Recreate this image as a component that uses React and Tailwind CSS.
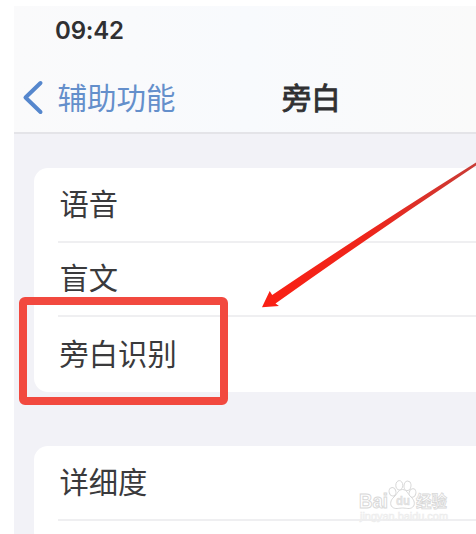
const Row = ({ children, last }) => (
  <div className="flex h-[74.5px] pl-6">
    <div className={`flex flex-1 items-center ${last ? '' : 'border-b-2 border-[#efeff1]'}`}>
      <span className="pb-[3.5px] pl-[1.5px] text-[29.3px] leading-none text-[#3a3a3c]">{children}</span>
    </div>
  </div>
);

const Watermark = () => (
  <svg className="absolute left-[356px] top-[476px]" width="98" height="50" viewBox="0 0 98 50" fill="#fff" stroke="#d8d8d8" strokeWidth="1">
    <g fontFamily="'Liberation Sans', 'Noto Sans CJK SC', sans-serif" fontWeight="700">
      <text x="3" y="32" fontSize="20" textLength="29" lengthAdjust="spacingAndGlyphs">Bai</text>
      <ellipse cx="36.5" cy="15.800" rx="3.4" ry="4.3" transform="rotate(-15 36.5 15.8)" />
      <ellipse cx="43.3" cy="9.3" rx="3.5" ry="4.700" />
      <ellipse cx="51.5" cy="9.8" rx="3.500" ry="4.700" transform="rotate(8 51.5 9.8)" />
      <ellipse cx="56.5" cy="17" rx="3.4" ry="4.3" transform="rotate(15 56.5 17)" />
      <path d="M46.500 13.500c-4.500 0-5.500 5-8.500 7.500-3.500 3-4.500 7.500-1.800 10 3 2.700 6.800 1 10.300 1s7.300 1.700 10.300-1c2.700-2.500 1.700-7-1.800-10-3-2.500-4-7.500-8.500-7.500z" />
      <text x="40" y="29" fontSize="13" fill="#e6e6e6" strokeWidth=".4" textLength="14" lengthAdjust="spacingAndGlyphs">du</text>
      <text x="60" y="31" fontSize="16" strokeWidth=".8" textLength="31" lengthAdjust="spacingAndGlyphs">经验</text>
      <text x="4" y="44" fontSize="10" fontWeight="400" fill="#f7f7f7" stroke="#ececec" strokeWidth=".5" textLength="88" lengthAdjust="spacingAndGlyphs">jingyan.baidu.com</text>
    </g>
  </svg>
);

export default function App() {
  return (
    <div className="relative h-[534px] w-[476px] overflow-hidden bg-white pl-3.5 pt-1.5 font-['Noto_Sans_CJK_SC',sans-serif]">
      <div className="h-[528px] overflow-hidden bg-[#f2f2f7]">
        <header className="h-[128px] border-b-2 border-[#e4e4e8] bg-linear-to-r from-[#fafafb] via-[#f8fafd] to-[#fafafa]">
          <div className="flex h-12 items-center pl-[41px]">
            <span className="pt-[1px] font-['Inter',sans-serif] text-[24px] font-semibold leading-none tracking-[-0.2px] text-[#303032]">09:42</span>
          </div>
          <div className="flex h-[88px] items-center pl-2">
            <svg width="22" height="36" viewBox="0 0 22 36" fill="none" stroke="#5687cd" strokeWidth="4" strokeLinecap="round" strokeLinejoin="round">
              <path d="M18.500 3 3.500 17.500l15 14.500" />
            </svg>
            <span className="ml-[13.5px] pb-[3px] text-[29.5px] leading-none text-[#648fcb]">辅助功能</span>
            <h1 className="ml-[106.5px] pb-[3px] text-[29.3px] font-normal leading-none text-[#303032] [-webkit-text-stroke:0.9px_#303032]">旁白</h1>
          </div>
        </header>
        <section className="ml-5 mt-[34px] rounded-l-[14px] bg-white">
          <Row>语音</Row>
          <Row>盲文</Row>
          <Row last>旁白识别</Row>
        </section>
        <section className="ml-5 mt-[54.5px] h-[100px] rounded-l-[14px] bg-white">
          <Row>详细度</Row>
        </section>
      </div>
      <div className="absolute left-[19px] top-[297px] h-[108px] w-[209px] rounded-[6px] border-8 border-[#f2493f]" />
      <svg className="absolute left-0 top-0" width="476" height="534" viewBox="0 0 476 534">
        <defs>
          <linearGradient id="arrow" x1="0" x2="1">
            <stop offset="0" stopColor="#fa2014" />
            <stop offset=".5" stopColor="#ee251b" />
            <stop offset="1" stopColor="#c93c36" />
          </linearGradient>
        </defs>
        <path d="M262 307.300 269.700 291l2.500 4Q370 229 476 162.500v3Q376 232 275.500 303.500l3.500 2.500z" fill="url(#arrow)" />
      </svg>
      <Watermark />
    </div>
  );
}
